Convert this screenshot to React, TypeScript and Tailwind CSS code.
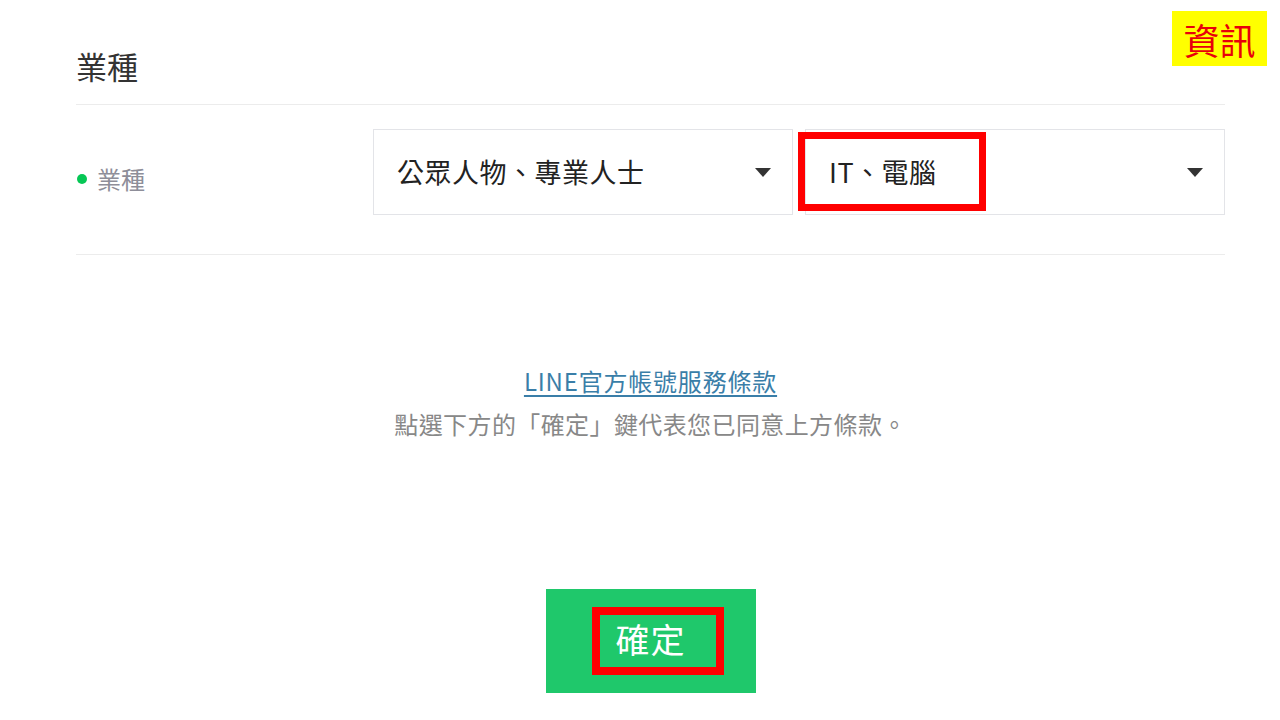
import React from 'react'

const font = { fontFamily: '"Noto Sans CJK TC", "Noto Sans", sans-serif' }

function Caret() {
    return (
        <svg width="16" height="9" viewBox="0 0 16 9" className="shrink-0">
            <path d="M0 0 L16 0 L8 9 Z" fill="#333" />
        </svg>
    )
}

function SelectBox({ value, children }: { value: string, children?: React.ReactNode }) {
    return (
        <div className="relative flex-1 h-[86px] border border-[#e3e4e8] bg-white flex items-center justify-between pl-[23px] pr-[21px]">
            <span className="text-[27px] text-[#222] tracking-[0.5px]">{value}</span>
            <Caret />
            {children}
        </div>
    )
}

export default function App() {
    return (
        <div className="relative w-[1280px] h-[720px] bg-white overflow-hidden" style={font}>
            {/* Annotation badge */}
            <div className="absolute left-[1172px] top-[11px] w-[95px] h-[55px] bg-[#ffff00] flex items-center justify-center">
                <span className="text-[36px] leading-none text-[#e8000b]">資訊</span>
            </div>

            <div className="pl-[76px] pr-[55px] pt-[44px]">
                <h2 className="text-[31px] leading-[44px] text-[#333] pb-[16px] border-b border-[#ececec]">業種</h2>

                <div className="flex items-start pt-[24px] pb-[39px] border-b border-[#ececec]">
                    <div className="w-[297px] flex items-center gap-[10px] pt-[32px]">
                        <span className="w-[10px] h-[10px] rounded-full bg-[#06c755] ml-[1px]" />
                        <span className="text-[24px] leading-[36px] text-[#8e8e99]">業種</span>
                    </div>
                    <div className="flex-1 flex gap-[12px]">
                        <SelectBox value="公眾人物、專業人士" />
                        <SelectBox value="IT、電腦">
                            <div className="absolute left-[-8px] top-[2px] w-[188px] h-[79px] border-[7px] border-[#ff0000]" />
                        </SelectBox>
                    </div>
                </div>

                <div className="flex flex-col items-center pt-[109px]">
                    <a className="text-[24px] leading-[34px] text-[#3a7ea8] underline underline-offset-[4px] decoration-[1.5px] tracking-[0.8px]">LINE官方帳號服務條款</a>
                    <p className="text-[24px] leading-[34px] text-[#888] mt-[9px] tracking-[0.4px]">點選下方的「確定」鍵代表您已同意上方條款。</p>
                </div>

                <div className="flex justify-center pt-[148px]">
                    <button className="relative w-[210px] h-[104px] bg-[#1fc86b] flex items-center justify-center">
                        <span className="text-[34px] leading-[40px] text-white tracking-[1px] -mt-[4px]">確定</span>
                        <div className="absolute left-[46px] top-[18px] w-[132px] h-[68px] border-[8px] border-[#ff0000]" />
                    </button>
                </div>
            </div>
        </div>
    )
}
